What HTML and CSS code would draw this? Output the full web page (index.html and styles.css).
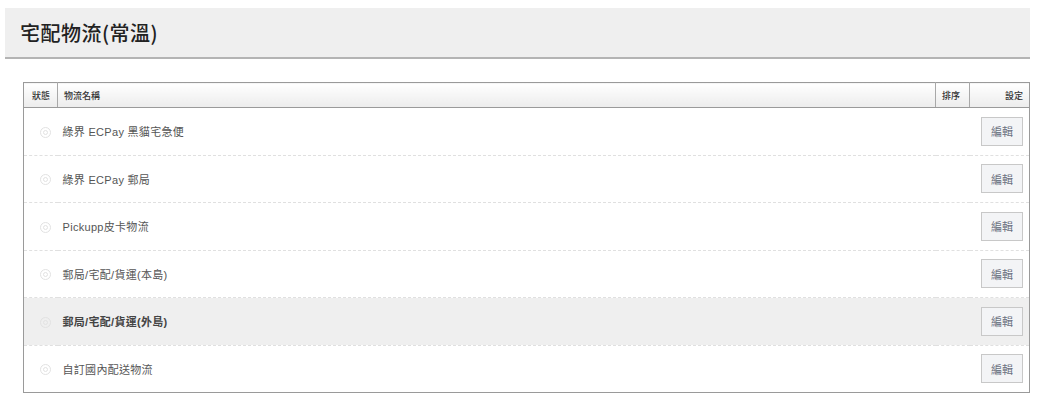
FILE: index.html
```html
<!DOCTYPE html>
<html lang="zh-Hant">
<head>
<meta charset="utf-8">
<title>宅配物流(常溫)</title>
<link rel="stylesheet" href="styles.css">
</head>
<body>
<div class="page">
  <div class="title-bar"><h1 class="title">宅配物流(常溫)</h1></div>
  <div class="table-wrap">
    <table class="list">
      <thead>
        <tr>
          <th class="c-status">狀態</th>
          <th class="c-name">物流名稱</th>
          <th class="c-sort">排序</th>
          <th class="c-set">設定</th>
        </tr>
      </thead>
      <tbody>
        <tr>
          <td class="c-status"><span class="radio"></span></td>
          <td class="c-name">綠界 ECPay 黑貓宅急便</td>
          <td class="c-sort"></td>
          <td class="c-set"><button class="btn">編輯</button></td>
        </tr>
        <tr>
          <td class="c-status"><span class="radio"></span></td>
          <td class="c-name">綠界 ECPay 郵局</td>
          <td class="c-sort"></td>
          <td class="c-set"><button class="btn">編輯</button></td>
        </tr>
        <tr>
          <td class="c-status"><span class="radio"></span></td>
          <td class="c-name">Pickupp皮卡物流</td>
          <td class="c-sort"></td>
          <td class="c-set"><button class="btn">編輯</button></td>
        </tr>
        <tr>
          <td class="c-status"><span class="radio"></span></td>
          <td class="c-name">郵局/宅配/貨運(本島)</td>
          <td class="c-sort"></td>
          <td class="c-set"><button class="btn">編輯</button></td>
        </tr>
        <tr class="active">
          <td class="c-status"><span class="radio"></span></td>
          <td class="c-name">郵局/宅配/貨運(外島)</td>
          <td class="c-sort"></td>
          <td class="c-set"><button class="btn">編輯</button></td>
        </tr>
        <tr>
          <td class="c-status"><span class="radio"></span></td>
          <td class="c-name">自訂國內配送物流</td>
          <td class="c-sort"></td>
          <td class="c-set"><button class="btn">編輯</button></td>
        </tr>
      </tbody>
    </table>
  </div>
</div>
</body>
</html>
```
FILE: styles.css
```css
* { box-sizing: border-box; }
html, body { margin: 0; padding: 0; background: #fff; }
body {
  font-family: "Liberation Sans", "Noto Sans CJK TC", sans-serif;
  color: #555;
}
.page { padding: 8px 9px 0 5px; }
.title-bar {
  background: #efefef;
  border-bottom: 2px solid #b4b4b4;
  height: 51px;
  display: flex;
  align-items: center;
  padding-left: 15px;
}
.title {
  margin: 0;
  font-family: "Noto Sans CJK TC", sans-serif;
  font-size: 20px;
  font-weight: 500;
  color: #222;
  letter-spacing: 0.5px;
}
.table-wrap { padding: 23px 0 0 18px; }
.list {
  width: 100%;
  border-collapse: collapse;
  border: 1px solid #9a9a9a;
}
.list th {
  height: 25px;
  padding: 0 6px;
  font-family: "Noto Sans CJK TC", sans-serif;
  font-size: 9px;
  font-weight: 500;
  color: #333;
  text-align: left;
  background: linear-gradient(#ffffff, #ececec);
  border-bottom: 1px solid #9a9a9a;
  border-left: 1px solid #a8a8a8;
}
.list th:first-child { border-left: none; }
.list th.c-status { width: 34px; padding-left: 8px; }
.list th.c-sort { width: 34px; }
.list th.c-set { width: 60px; text-align: right; }
.list td {
  height: 47.5px;
  padding: 0;
  font-size: 11px;
  letter-spacing: 0.3px;
  color: #555;
  border-bottom: 1px dashed #e0e0e0;
  vertical-align: middle;
}
.list tbody tr:last-child td { border-bottom: none; }
.list td.c-name { padding-left: 5px; }
.list td.c-status { text-align: center; }
.list td.c-set { text-align: right; padding-right: 6px; letter-spacing: 0; }
.list tr.active td { background: #efefef; }
.list tr.active td.c-name { font-weight: bold; color: #444; }
.radio {
  display: inline-block;
  width: 11px;
  height: 11px;
  border-radius: 50%;
  border: 1px solid #e2e2e2;
  position: relative;
  vertical-align: middle;
  margin-left: 9px;
}
.radio::after {
  content: "";
  position: absolute;
  left: 2px;
  top: 2px;
  width: 5px;
  height: 5px;
  border-radius: 50%;
  border: 1px solid #e2e2e2;
  box-sizing: border-box;
}
.btn {
  width: 42px;
  height: 29px;
  padding: 0;
  border: 1px solid #c8c8c8;
  background: #f3f4f6;
  font-family: "Noto Sans CJK TC", sans-serif;
  font-size: 11px;
  color: #6a7080;
  border-radius: 0;
  cursor: pointer;
}
```
